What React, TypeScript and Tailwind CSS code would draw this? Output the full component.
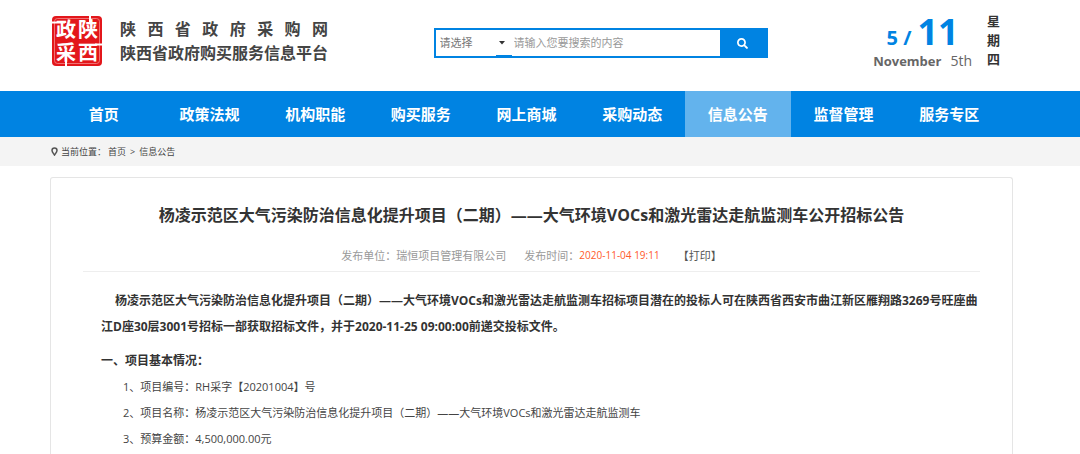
import React, { useState } from 'react';
import { FaSearch } from 'react-icons/fa';

const navItems = [
  '首页',
  '政策法规',
  '机构职能',
  '购买服务',
  '网上商城',
  '采购动态',
  '信息公告',
  '监督管理',
  '服务专区',
];

const details = [
  '1、项目编号：RH采字【20201004】号',
  '2、项目名称：杨凌示范区大气污染防治信息化提升项目（二期）——大气环境VOCs和激光雷达走航监测车',
  '3、预算金额：4,500,000.00元',
];

const Seal: React.FC = () => (
  <svg width="52" height="52" viewBox="0 0 52 52" className="shrink-0" aria-hidden="true">
    <rect x="1" y="1" width="50" height="50" rx="4" fill="#e3171b" />
    <rect x="3.5" y="3.5" width="45" height="45" rx="3" fill="none" stroke="#f59a9b" strokeWidth="0.7" />
    <g fill="#fff" fontSize="20" fontWeight="700">
      <text x="5" y="22">政</text>
      <text x="27" y="22">陕</text>
      <text x="5" y="45">采</text>
      <text x="27" y="45">西</text>
    </g>
    <path d="M0 7.5h14M39 0v8M44 29.5h7M15 43v9" stroke="#fff" strokeWidth="2" fill="none" />
  </svg>
);

const SearchBar: React.FC = () => {
  const [category, setCategory] = useState('');
  const [keyword, setKeyword] = useState('');

  return (
    <form
      onSubmit={(e) => e.preventDefault()}
      className="flex h-[30px] w-[334px] border-2 border-[#0083e2] text-[11px]"
    >
      <div className="relative w-[76px] shrink-0">
        <select
          aria-label="请选择"
          value={category}
          onChange={(e) => setCategory(e.target.value)}
          className="h-full w-full appearance-none bg-transparent pl-1 text-[#777] outline-none"
        >
          <option value="">请选择</option>
        </select>
        <svg width="6" height="4" viewBox="0 0 6 4" className="pointer-events-none absolute right-[7px] top-[11px]">
          <path d="M0 0h6L3 3.5z" fill="#333" />
        </svg>
        <span className="absolute bottom-0 right-0 h-px w-4 bg-[#0083e2]" />
      </div>
      <input
        type="text"
        aria-label="搜索内容"
        placeholder="请输入您要搜索的内容"
        value={keyword}
        onChange={(e) => setKeyword(e.target.value)}
        className="min-w-0 flex-1 pl-[2px] outline-none placeholder:text-[#999]"
      />
      <button type="submit" aria-label="搜索" className="flex w-[46px] items-center justify-center bg-[#0083e2] text-white">
        <FaSearch size={11} />
      </button>
    </form>
  );
};

const Header: React.FC = () => (
  <header className="flex h-[91px] items-start justify-between pl-[51px] pr-20">
    <div className="flex items-center gap-[17px] pt-[15px]">
      <Seal />
      <div className="w-[208px] text-base font-bold leading-6 text-[#444]">
        <div className="[text-align-last:justify]">陕 西 省 政 府 采 购 网</div>
        <div className="whitespace-nowrap">陕西省政府购买服务信息平台</div>
      </div>
    </div>
    <div className="pt-7">
      <SearchBar />
    </div>
    <div className="flex gap-[15px] pt-3">
      <div>
        <div className="flex items-baseline justify-center gap-[6px] font-bold text-[#0083e2]">
          <span className="text-xl leading-5">5 /</span>
          <span className="text-4xl leading-10">11</span>
        </div>
        <div className="flex items-baseline gap-[9px] text-[#666]">
          <span className="text-[13px] font-bold leading-[18px]">November</span>
          <span className="text-sm leading-[18px]">5th</span>
        </div>
      </div>
      <div className="w-[13px] text-[13px] font-bold leading-[19px] text-[#333]">星期四</div>
    </div>
  </header>
);

const App: React.FC = () => {
  return (
    <div className="min-h-screen bg-white font-['Open_Sans','Noto_Sans_CJK_SC',sans-serif] text-[#333]">
      <Header />

      <nav className="bg-[#0083e2] pl-[51px] pr-[78px]">
        <ul className="grid grid-cols-9">
          {navItems.map((item) => (
            <li key={item}>
              <a
                href="#"
                className={`block whitespace-nowrap text-center text-[15px] font-bold leading-[46px] text-white ${
                  item === '信息公告' ? 'bg-[#63b3ed]' : ''
                }`}
              >
                {item}
              </a>
            </li>
          ))}
        </ul>
      </nav>

      <div className="flex h-[29px] items-center bg-[#f4f4f4] pl-[51px] text-[9px] text-[#444]">
        <svg width="7" height="9" viewBox="0 0 7 9" className="mr-[3px]">
          <path d="M3.5 1C2 1 1 2 1 3.4 1 4.8 2.4 6.4 3.5 8 4.6 6.4 6 4.8 6 3.4 6 2 5 1 3.5 1z" fill="none" stroke="#555" strokeWidth="1.5" />
        </svg>
        <span>当前位置：</span>
        <a href="#" className="ml-[2px]">首页</a>
        <span className="mx-1">&gt;</span>
        <a href="#">信息公告</a>
      </div>

      <main className="pl-[50px] pr-[67px] pt-[11px]">
        <article className="rounded-t-[3px] border border-b-0 border-[#e5e5e5] px-8 pb-8 pt-[23px]">
          <h1 className="text-center text-base font-bold leading-7">
            杨凌示范区大气污染防治信息化提升项目（二期）——大气环境VOCs和激光雷达走航监测车公开招标公告
          </h1>
          <div className="mt-4 flex items-center justify-center border-b border-[#eee] pb-[5px] text-[11px] leading-[21px] text-[#999]">
            <span>发布单位：瑞恒项目管理有限公司</span>
            <span className="ml-[18px]">发布时间：</span>
            <time className="text-[10px] text-[#ff5a2a]">2020-11-04 19:11</time>
            <button type="button" className="ml-[18px] text-[#555]">【打印】</button>
          </div>

          <div className="pl-[18px] pt-4">
            <p className="indent-[14px] text-xs font-bold leading-[26px]">
              杨凌示范区大气污染防治信息化提升项目（二期）——大气环境VOCs和激光雷达走航监测车招标项目潜在的投标人可在陕西省西安市曲江新区雁翔路3269号旺座曲江D座30层3001号招标一部获取招标文件，并于2020-11-25
              09:00:00前递交投标文件。
            </p>
            <h2 className="mt-2 text-xs font-bold leading-[26px]">一、项目基本情况：</h2>
            <ul className="pl-[22px] text-[11px] leading-[26px] text-[#444]">
              {details.map((line) => (
                <li key={line}>{line}</li>
              ))}
            </ul>
          </div>
        </article>
      </main>
    </div>
  );
};

export default App;
